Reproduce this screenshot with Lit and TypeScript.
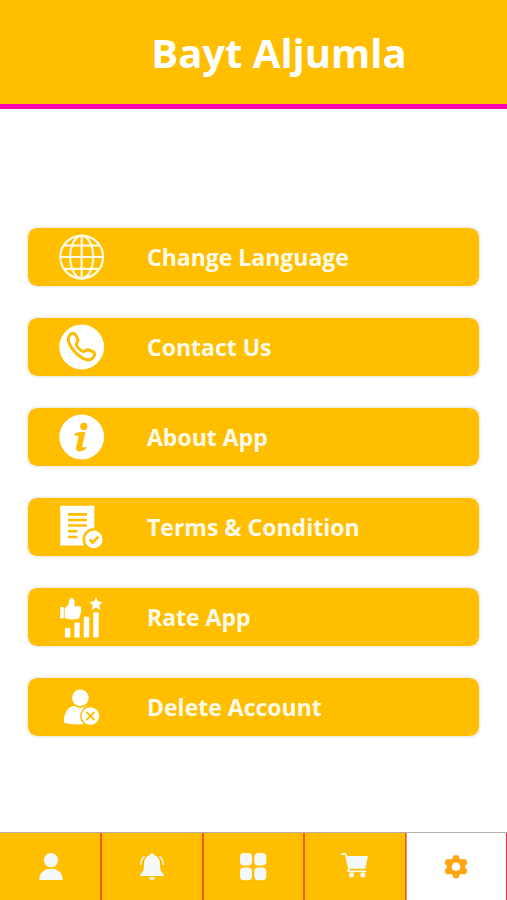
import { LitElement, html, svg, css } from "lit";
import { customElement, state } from "lit/decorators.js";

const globe = svg`
  <g fill="none" stroke="#fffbe6" stroke-width="2.2">
    <circle cx="22.7" cy="23" r="21.4" />
    <ellipse cx="22.7" cy="23" rx="11.5" ry="21.4" />
    <path d="M22.7 1.6v42.8M1.3 23h42.8M4.5 11.5h36.4M4.5 34.8h36.4" />
  </g>`;

const phone = svg`
  <circle cx="22.7" cy="23" r="22.4" fill="#fff" />
  <path d="M10.6 11.2C12.3 8.8 15.6 8.6 16.8 11.2L19 15.6C19.8 17.8 17 18.6 17.4 20.6C18.2 23.2 21.4 26.4 24.2 27.4C26.4 28 27.4 24.8 29.8 25.8L33.8 27.6C36.6 29 35.6 32.6 33.4 34.4C30.4 37 25.6 35.6 21.4 32.8C16.6 29.6 12.8 25 10.6 20.2C9 16.6 8.8 13.6 10.6 11.2Z"
    fill="none" stroke="#ffbb00" stroke-width="3" stroke-linejoin="round" />`;

const info = svg`
  <circle cx="22.7" cy="23" r="22.4" fill="#fff" />
  <circle cx="24.8" cy="12.4" r="3.6" fill="#ffbb00" />
  <path d="M16 20.2C18.6 18.6 22 18 26 18.3L22.8 32.2C22.4 34.2 24.4 34.2 27.8 33.2C25.6 36 22.6 37.2 20 37C17.6 36.8 17 35 17.6 32.4L19.8 23.2C20.2 21.2 19 20.6 16 21.6Z" fill="#ffbb00" stroke="#ffbb00" stroke-width=".8" />`;

const terms = svg`
  <path d="M1.2 1.8h34.2v39.6H1.2z" fill="#fff" />
  <path d="M9 10.4h19M9 16h19M9 21.5h19M9 27.3h9.6M9 33h9.6" stroke="#ffbf00" stroke-width="2.6" />
  <circle cx="34.8" cy="35.4" r="10" fill="#fff" stroke="#ffbf00" stroke-width="2.4" />
  <path d="M30.6 35.6l3 3 5.8-6" fill="none" stroke="#ffbf00" stroke-width="2.8" />`;

const rate = svg`
  <g fill="#fff">
    <rect x="1.2" y="13" width="3.6" height="11.6" rx="1" />
    <path d="M5.6 14.2L9.6 10.4C10.4 8.4 9.8 4.3 12.2 4.1C15.6 4 16.2 8.2 15.4 12.2H20.4C22.6 12.4 22.6 14.6 21.8 15.6C22.8 16.8 22.2 18.4 21.4 18.8C22 20.2 21.4 21.4 20.6 21.8C21 23.4 20.2 24.8 18.4 25C14 25.8 9.6 25.6 5.6 24Z" />
    <rect x="6" y="34" width="5.4" height="9.4" rx="1" />
    <rect x="15.4" y="28.4" width="5.4" height="15" rx="1" />
    <rect x="24.8" y="22.8" width="5.4" height="20.6" rx="1" />
    <rect x="34.3" y="18.2" width="5.4" height="25.2" rx="1" />
    <path d="M37 3l2 4.4 4.8.5-3.600 3.200 1 4.800-4.200-2.500-4.200 2.500 1-4.800-3.600-3.200 4.800-.5z" />
  </g>`;

const remove = svg`
  <circle cx="21.4" cy="13.8" r="8.3" fill="#fff" />
  <path d="M5 38.6C4.6 29.6 8.6 23 15 21.8C19 24.4 23.8 24.4 27.8 21.8C30 22.2 31.6 22.8 33 24V40H27C19 40.8 10 40.6 5 38.6Z" fill="#fff" />
  <circle cx="31.4" cy="32" r="9.6" fill="#fff" stroke="#ffbf00" stroke-width="1.6" />
  <path d="M27.4 28l8 8M35.4 28l-8 8" stroke="#ffbf00" stroke-width="1.8" />`;

const user = svg`
  <circle cx="15" cy="8.2" r="7.1" />
  <path d="M3.3 28C3.3 21 8 16.8 15 16.8S26.7 21 26.7 28z" />`;

const bell = svg`
  <path d="M15 1.2C16.3 1.2 17.1 2 17.3 3.2C21 4.4 22.8 7.4 22.9 11.4C23 17 23.6 19.4 26.6 22C27.2 23 26.8 24 25.6 24H4.4C3.2 24 2.8 23 3.4 22C6.4 19.4 7 17 7.1 11.4C7.2 7.4 9 4.4 12.7 3.2C12.9 2 13.7 1.2 15 1.2Z" />
  <path d="M12 25.2h6c-.4 1.8-1.5 2.6-3 2.6s-2.6-.8-3-2.6z" />
  <path d="M7 4.8C4.8 6.8 3.8 9.4 3.8 12.6M23 4.8C25.2 6.8 26.2 9.4 26.2 12.6" fill="none" stroke="currentColor" stroke-width="1.5" stroke-linecap="round" />`;

const grid = svg`
  <rect x="2" y="1" width="12" height="12.6" rx="4" />
  <rect x="16.3" y="1" width="12" height="12.6" rx="4" />
  <rect x="2" y="15.6" width="12" height="12.6" rx="4" />
  <rect x="16.3" y="15.6" width="12" height="12.6" rx="4" />`;

const cart = svg`
  <path d="M7 4H27.8L25.4 16.8H9.4z" />
  <path d="M1.8 1.9H5.6L9.2 17.2C7.2 18 7.6 19.4 9.4 19.4H25.4" fill="none" stroke="currentColor" stroke-width="1.7" stroke-linecap="round" stroke-linejoin="round" />
  <circle cx="11.6" cy="22.9" r="2.5" />
  <circle cx="22.8" cy="22.9" r="2.5" />`;

const gear = svg`
  <circle cx="15" cy="14.7" r="9" />
  <circle cx="15" cy="6.2" r="3.2" />
  <circle cx="15" cy="23.2" r="3.2" />
  <circle cx="7.4" cy="10.4" r="3.4" />
  <circle cx="22.6" cy="10.4" r="3.4" />
  <circle cx="7.4" cy="19" r="3.4" />
  <circle cx="22.6" cy="19" r="3.4" />
  <circle cx="15" cy="14.7" r="4.3" fill="#fff" />`;

const menu = [
  { label: "Change Language", icon: globe },
  { label: "Contact Us", icon: phone },
  { label: "About App", icon: info },
  { label: "Terms & Condition", icon: terms },
  { label: "Rate App", icon: rate },
  { label: "Delete Account", icon: remove },
];

const tabs = [
  { label: "Profile", icon: user },
  { label: "Notifications", icon: bell },
  { label: "Categories", icon: grid },
  { label: "Cart", icon: cart },
  { label: "Settings", icon: gear },
];

@customElement("app-root")
export class AppRoot extends LitElement {
  @state() private current = 4;

  static styles = css`
    :host {
      display: flex;
      flex-direction: column;
      min-height: 100vh;
      background: #fff;
      font-family: "Open Sans", "Noto Sans", sans-serif;
    }
    * {
      box-sizing: border-box;
    }
    header {
      display: flex;
      align-items: center;
      justify-content: center;
      padding: 25px 0 23px 51px;
      background: #ffbf00;
      border-bottom: 5px solid #ff00b4;
    }
    h1 {
      margin: 0;
      font-size: 40px;
      line-height: 56px;
      font-weight: 700;
      color: #fff;
    }
    main {
      flex: 1;
      display: flex;
      flex-direction: column;
      justify-content: center;
      gap: 30px;
      padding: 22px 27px 0;
    }
    .item {
      display: flex;
      align-items: center;
      gap: 42px;
      height: 60px;
      padding: 0 31px;
      border: 1px solid #f4eedc;
      border-radius: 10px;
      background: #ffbf00;
      background-clip: padding-box;
      box-shadow: 0 0 3px #e4e4e4;
      color: #fffbea;
      font: inherit;
      font-size: 23px;
      line-height: 32px;
      font-weight: 700;
      text-align: left;
      cursor: pointer;
    }
    .item svg {
      width: 46px;
      height: 46px;
      flex: none;
    }
    nav {
      display: grid;
      grid-template-columns: repeat(5, 1fr);
      height: 68px;
      border-top: 1px solid #b4b0a8;
    }
    .tab {
      display: flex;
      align-items: center;
      justify-content: center;
      padding: 0;
      border: solid #ee5a12;
      border-width: 0 1px;
      background: #ffbf00;
      color: #f5f9fa;
      cursor: pointer;
    }
    .tab:first-child {
      border-left-color: #ffbf00;
    }
    .tab svg {
      width: 30px;
      height: 30px;
      fill: currentColor;
    }
    .tab[aria-current="page"] {
      background: #fff;
      border-left-color: #f58c80;
      border-right-color: #e0304c;
      color: #ffa510;
    }
  `;

  render() {
    return html`
      <header><h1>Bayt Aljumla</h1></header>
      <main>
        ${menu.map(
          (m) => html`<button class="item">
            <svg viewBox="0 0 46 46" aria-hidden="true">${m.icon}</svg>
            <span>${m.label}</span>
          </button>`
        )}
      </main>
      <nav>
        ${tabs.map(
          (t, i) => html`<button
            class="tab"
            aria-label=${t.label}
            aria-current=${i === this.current ? "page" : "false"}
            @click=${() => (this.current = i)}
          >
            <svg viewBox="0 0 30 30" aria-hidden="true">${t.icon}</svg>
          </button>`
        )}
      </nav>
    `;
  }
}
